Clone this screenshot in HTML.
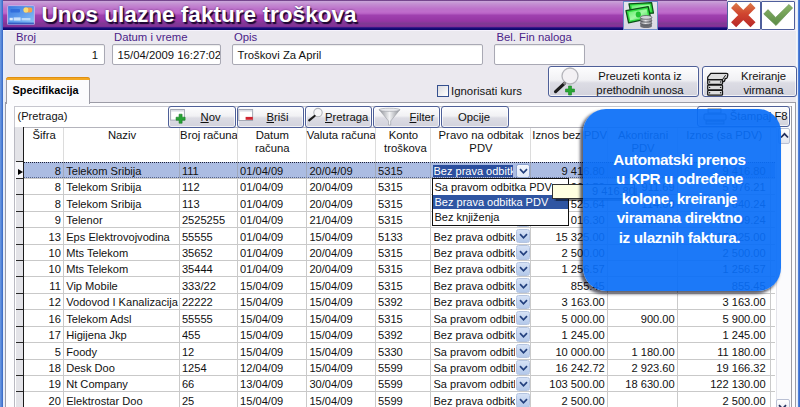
<!DOCTYPE html>
<html><head><meta charset="utf-8"><title>Unos ulazne fakture troškova</title>
<style>
html,body{margin:0;padding:0}
body{width:800px;height:407px;overflow:hidden;position:relative;background:#ebe9ef;font-family:"Liberation Sans",sans-serif;font-size:11.3px;color:#111;}
div,span{position:absolute;box-sizing:border-box;white-space:nowrap}
.lbl{color:#4b2488;font-size:11.3px;line-height:12px}
.inp{background:#fff;border:1px solid #a9a9b4;border-radius:2px;height:21px;top:44px;box-shadow:inset 0 1px 1px rgba(0,0,0,.08)}
.inp span{top:4px;line-height:12px;font-size:11.3px}
.btn{border:1px solid #4e5f98;border-radius:3px;background:linear-gradient(#fdfdfe 0%,#f1f1f4 45%,#dcdce4 55%,#d2d2dc 100%);box-shadow:inset 0 0 0 1px rgba(255,255,255,.7)}
.btn span{line-height:12px}
.hdr{top:127px;height:35px;text-align:center;line-height:13.3px;font-size:11.3px;padding-top:2.2px;white-space:normal;color:#111}
.hsep{top:128px;height:34px;width:1px;background:#dcdcdc}
.vsep{top:162px;height:245px;width:1px;background:rgba(150,150,150,.5)}
.hl{left:24px;height:1px;background:#c9c9c9;width:751px}
.c{height:16px;line-height:16px;font-size:11.1px;overflow:hidden}
.r{text-align:right}
.dd{width:14.5px;height:14.5px;left:515.5px;border:1px solid #b4c4e0;border-radius:2.5px;background:linear-gradient(#d6e2f6,#b4c9ea)}
.ind{left:15.5px;width:7.5px;background:#e3e3e8;border-top:1px solid #2a2a2a;}
u{text-decoration:underline}
</style></head><body>

<div style="left:0;top:0;width:2.7px;height:407px;background:linear-gradient(90deg,#6f9ae0,#4d7fd6 60%,#3563c0)"></div>
<div style="left:2.7px;top:29px;width:2.8px;height:378px;background:#e6edf9"></div>
<div style="left:798.2px;top:0;width:1.8px;height:407px;background:linear-gradient(90deg,#5a8ae0,#2f62c4)"></div>
<div style="left:796px;top:0;width:2.2px;height:407px;background:linear-gradient(90deg,#fbfcfe,#dbe6f7)"></div>
<div style="left:2.7px;top:0;width:724px;height:29.7px;background:linear-gradient(180deg,#6e3f86 0,#7a4a92 .8px,#c9a3d9 1.4px,#c48ed2 4px,#bc70ca 9px,#c06ccc 12px,#b45cc2 14px,#a041b0 15px,#9535a4 21px,#7e3a94 23.5px,#853298 25.5px,#7a2c94 27px,#1c1280 27.7px,#0a0668 29.7px)"></div>
<div style="left:2.7px;top:29.7px;width:794px;height:1.4px;background:#f6f3fc"></div>
<svg style="position:absolute;left:7px;top:4.8px" width="28" height="20.4" viewBox="0 0 28 20.4">
<defs><linearGradient id="ig" x1="0" y1="0" x2="1" y2="1"><stop offset="0" stop-color="#3a78e0"/><stop offset=".45" stop-color="#5a98ec"/><stop offset="1" stop-color="#8cc6f6"/></linearGradient></defs>
<rect x="0.6" y="0.6" width="26.8" height="19.2" rx="1.2" fill="url(#ig)" stroke="#c4b0e4" stroke-width="1"/>
<rect x="1.1" y="17.6" width="25.8" height="1.8" fill="#2a50b8" opacity=".85"/>
<rect x="16.6" y="2.6" width="8.6" height="4.8" rx="1.6" fill="#f3a24a"/><rect x="16.6" y="2.6" width="4.6" height="4.8" rx="1.6" fill="#f7e27a" opacity=".9"/>
<rect x="3.4" y="4" width="9.6" height="3.4" rx="1" fill="#2a66d8" opacity=".75"/>
<rect x="2.6" y="12.8" width="3.2" height="2.6" fill="#e8f4fd" opacity=".9"/><rect x="6.6" y="12.4" width="7" height="3.2" fill="#e8f4fd" opacity=".8"/><rect x="14.6" y="13" width="8.8" height="2.4" fill="#cfe6fa" opacity=".8"/>
</svg>
<div style="left:41.5px;top:1.5px;font-size:22.6px;font-weight:bold;color:#fff;line-height:26px;text-shadow:1.5px 1.5px 1px #1a0630,0 0 2px rgba(40,0,60,.6)">Unos ulazne fakture troškova</div>
<div style="left:622.5px;top:1px;width:35.5px;height:28.5px;background:linear-gradient(#e6e6ec,#d9d9e2);border:1px solid #6c8cc8"></div>
<svg style="position:absolute;left:615px;top:0" width="50" height="32" viewBox="615 0 50 32">
<defs><linearGradient id="bg1" x1="0" y1="0" x2="1" y2="1"><stop offset="0" stop-color="#58ec62"/><stop offset=".5" stop-color="#a4f9a6"/><stop offset="1" stop-color="#30d840"/></linearGradient>
<linearGradient id="cy" x1="0" y1="0" x2="1" y2="0"><stop offset="0" stop-color="#6e7076"/><stop offset=".45" stop-color="#e4e5e8"/><stop offset="1" stop-color="#77797f"/></linearGradient></defs>
<polygon points="629,3.8 651.6,2.6 653.4,13 631,14.2" fill="#2fdc40" stroke="#0b4f16" stroke-width="1.3" stroke-linejoin="round"/>
<polygon points="631.5,5.6 649.8,4.6 651,11.4 632.6,12.4" fill="url(#bg1)"/>
<polygon points="626,10.6 648.2,6.6 650.6,18.2 628.6,22.8" fill="#2fdc40" stroke="#0b4f16" stroke-width="1.3" stroke-linejoin="round"/>
<polygon points="628.4,12.2 646.6,8.9 648.2,16.9 630.2,20.6" fill="url(#bg1)"/>
<ellipse cx="638.3" cy="14.6" rx="2.6" ry="3" fill="#22c234"/>
<rect x="640.3" y="17.4" width="11.6" height="8.8" fill="url(#cy)"/>
<ellipse cx="646.1" cy="26.2" rx="5.8" ry="1.9" fill="#6a6c72"/>
<path d="M640.3 20.4 a5.8 1.7 0 0 0 11.6 0 M640.3 23.3 a5.8 1.7 0 0 0 11.6 0" fill="none" stroke="#55575d" stroke-width=".9"/>
<ellipse cx="646.1" cy="17.4" rx="5.8" ry="1.9" fill="#d2d3d8" stroke="#5e6066" stroke-width=".8"/>
</svg>
<div style="left:726.5px;top:1px;width:34px;height:28.5px;background:#fff;border:1px solid #4f5f9c;border-radius:1px"></div>
<div style="left:761px;top:1px;width:34px;height:28.5px;background:#fff;border:1px solid #4f5f9c;border-radius:1px"></div>
<svg style="position:absolute;left:727px;top:0" width="68" height="30" viewBox="727 0 68 30">
<defs><linearGradient id="rg" gradientUnits="userSpaceOnUse" x1="0" y1="3" x2="0" y2="27"><stop offset="0" stop-color="#dc7a48"/><stop offset=".45" stop-color="#d0452f"/><stop offset="1" stop-color="#b82828"/></linearGradient>
<linearGradient id="gg" gradientUnits="userSpaceOnUse" x1="0" y1="4" x2="0" y2="26"><stop offset="0" stop-color="#8ab466"/><stop offset="1" stop-color="#5a8a46"/></linearGradient></defs>
<path d="M733.6 5.4 L753 24.8 M753 5.4 L733.6 24.8" stroke="url(#rg)" stroke-width="7.2" fill="none"/>
<polygon points="763.7,14 768,9.6 775.6,17.4 789,4.4 792.6,8 776,25.6" fill="url(#gg)" stroke="#5f8c4c" stroke-width=".6" stroke-linejoin="round"/>
</svg>
<div class="lbl" style="left:16px;top:30.7px">Broj</div>
<div class="lbl" style="left:114px;top:30.7px">Datum i vreme</div>
<div class="lbl" style="left:234px;top:30.7px">Opis</div>
<div class="lbl" style="left:496.5px;top:30.7px">Bel. Fin naloga</div>
<div class="inp" style="left:14px;width:91px"><span style="right:6px">1</span></div>
<div class="inp" style="left:112px;width:109px;overflow:hidden"><span style="left:4.5px">15/04/2009 16:27:02</span></div>
<div class="inp" style="left:232px;width:251px"><span style="left:4.5px">Troškovi Za April</span></div>
<div class="inp" style="left:494px;width:91px"></div>
<div style="left:437px;top:84.5px;width:12px;height:12px;border:1px solid #35508f;background:linear-gradient(135deg,#dcdce0,#fff)"></div>
<div style="left:451px;top:84.5px;line-height:12px;font-size:11.4px">Ignorisati kurs</div>
<div class="btn" style="left:548px;top:66px;width:151px;height:31px"><span style="left:45px;width:92px;top:3px;text-align:center;white-space:normal;line-height:13.6px;font-size:11.3px">Preuzeti konta iz prethodnih unosa</span></div>
<div class="btn" style="left:701.5px;top:66px;width:95.5px;height:31px"><span style="left:33px;width:56px;top:3px;text-align:center;white-space:normal;line-height:13.6px;font-size:11.3px">Kreiranje virmana</span></div>
<svg style="position:absolute;left:550px;top:66px" width="34" height="31" viewBox="0 0 34 31">
<circle cx="20" cy="10" r="8" fill="#f3f1f4" stroke="#b4b4ba" stroke-width="1.3"/>
<path d="M14.2 17.6 L5.6 25.6" stroke="#1c1c1c" stroke-width="3.3" stroke-linecap="round"/>
<path d="M15.3 16.5 L13.6 18.1" stroke="#8a8a8a" stroke-width="2.6"/>
<path d="M18.5 20 h3 v3 h3 v3 h-3 v3 h-3 v-3 h-3 v-3 h3z" fill="#2aa532" stroke="#168a24" stroke-width=".6" stroke-linejoin="round"/>
</svg>
<svg style="position:absolute;left:704px;top:70px" width="30" height="28" viewBox="704 70 30 28">
<g fill="#dedede" stroke="#151515" stroke-width="1.25" stroke-linejoin="round">
<rect x="707.7" y="90.4" width="14.8" height="4.8" rx=".8"/>
<rect x="707.7" y="85" width="14.8" height="4.8" rx=".8"/>
<rect x="707.7" y="79.6" width="14.8" height="4.8" rx=".8"/>
<path d="M707.7 79.6 V77.2 L710.8 73.3 H726.2 Q728 73.3 727.8 75.2 L727.3 77.4 Q726.8 78.8 725.2 78.5 L724.7 80.6 Q724 82 722.5 81.4 V79.6 Z"/>
</g>
<path d="M722.5 79.6 L725.6 75.2" fill="none" stroke="#151515" stroke-width="1"/>
<g fill="#151515"><circle cx="709.6" cy="82" r=".7"/><circle cx="720.6" cy="82" r=".7"/><circle cx="709.6" cy="87.4" r=".7"/><circle cx="720.6" cy="87.4" r=".7"/><circle cx="709.6" cy="92.8" r=".7"/><circle cx="720.6" cy="92.8" r=".7"/></g>
</svg>
<div style="left:5.3px;top:102px;width:790.7px;height:310px;background:#fcfcfe;border:1px solid #9c9ca6"></div>
<div style="left:5.5px;top:76.5px;width:84px;height:27px;background:#fbfbfd;border:1px solid #9c9ca6;border-bottom:none;border-radius:3px 3px 0 0"></div>
<div style="left:5.5px;top:76.5px;width:84px;height:3px;background:#f2a722;border-radius:3px 3px 0 0;border-top:1px solid #e08f10"></div>
<div style="left:12.5px;top:84px;font-weight:bold;font-size:10.9px;line-height:12px;color:#000">Specifikacija</div>
<div style="left:14px;top:127px;width:777px;height:285px;background:#fff;border-left:1px solid #b9b9c2"></div>
<div style="left:14px;top:105.5px;width:777.5px;height:22px;background:#fff;border:1px solid #c6c6ce;border-bottom-color:#b4b4bc"></div>
<div style="left:17.5px;top:109.5px;font-size:11.1px;line-height:12px">(Pretraga)</div>
<div class="btn" style="left:167.5px;top:105.5px;width:68.5px;height:22px"></div>
<div style="left:200.5px;top:110.5px;line-height:12px;font-size:11.3px"><u>N</u>ov</div>
<div class="btn" style="left:237px;top:105.5px;width:67px;height:22px"></div>
<div style="left:266.5px;top:110.5px;line-height:12px;font-size:11.3px"><u>B</u>riši</div>
<div class="btn" style="left:304.5px;top:105.5px;width:67px;height:22px"></div>
<div style="left:325px;top:110.5px;line-height:12px;font-size:11.3px"><u>P</u>retraga</div>
<div class="btn" style="left:373px;top:105.5px;width:67px;height:22px"></div>
<div style="left:409.5px;top:110.5px;line-height:12px;font-size:11.3px"><u>F</u>ilter</div>
<div class="btn" style="left:441px;top:105.5px;width:67.5px;height:22px"></div>
<div style="left:458px;top:110.5px;line-height:12px;font-size:11.3px">Opcije</div>
<svg style="position:absolute;left:169px;top:107px" width="19" height="19" viewBox="0 0 19 19">
<rect x="1.6" y="2.5" width="13.8" height="10.6" fill="#fff" stroke="#a4a8b4" stroke-width="1"/><rect x="2.1" y="3" width="12.8" height="1.6" fill="#dadce4"/>
<path d="M10.1 7.2 h3 v3 h3 v3 h-3 v3 h-3 v-3 h-3 v-3 h3z" fill="#27a335" stroke="#157a22" stroke-width=".6" stroke-linejoin="round"/></svg>
<svg style="position:absolute;left:237px;top:107px" width="19" height="19" viewBox="0 0 19 19">
<rect x="1.8" y="2.5" width="13.8" height="11" fill="#fff" stroke="#a4a8b4" stroke-width="1"/><rect x="2.3" y="3" width="12.8" height="1.6" fill="#dadce4"/>
<rect x="8.6" y="9.9" width="7.2" height="2.9" fill="#cf2430"/></svg>
<svg style="position:absolute;left:306px;top:107px" width="18" height="19" viewBox="0 0 18 19">
<circle cx="12" cy="5.6" r="4.2" fill="#f6f6f8" stroke="#b4b6bc" stroke-width="1.1"/>
<path d="M8.6 9 L3.2 13.4" stroke="#1c1c1c" stroke-width="2.2" stroke-linecap="round"/></svg>
<svg style="position:absolute;left:378px;top:107px" width="24" height="20" viewBox="0 0 24 20">
<defs><linearGradient id="fg" x1="0" y1="0" x2="1" y2="0"><stop offset="0" stop-color="#8a8d94"/><stop offset=".5" stop-color="#f2f3f5"/><stop offset="1" stop-color="#8a8d94"/></linearGradient></defs>
<path d="M1 2.5 H22 L12.7 14 V18 H10.5 V14 Z" fill="url(#fg)" stroke="#9a9da4" stroke-width=".6"/>
<ellipse cx="11.5" cy="2.8" rx="10.5" ry="1.6" fill="#e9eaee" stroke="#9a9da4" stroke-width=".6"/></svg>
<div class="btn" style="left:697px;top:105.5px;width:92.5px;height:21.5px"></div>
<div style="left:729.8px;top:110px;line-height:12px;font-size:11.3px">Štampaj F8</div>
<svg style="position:absolute;left:702px;top:108px" width="26" height="18" viewBox="0 0 26 18"><rect x="6" y="1" width="13" height="4" fill="#eee" stroke="#555" stroke-width=".8"/><rect x="2" y="6" width="22" height="6" rx="1" fill="#d8d8dc" stroke="#444" stroke-width=".9"/><rect x="4" y="13" width="18" height="3" fill="#bbb" stroke="#444" stroke-width=".8"/></svg>
<div style="left:15px;top:127px;width:8px;height:35px;background:#e3e3e8"></div>
<div style="left:22.6px;top:127px;width:1.4px;height:280px;background:#1c1c1c"></div>
<div style="left:24px;top:162.00px;width:751px;height:16.13px;background:#abbce2;border-top:1px dotted #1c2038;border-bottom:1px dotted #56648c"></div>
<div class="hdr" style="left:24.0px;width:40.2px;">Šifra</div>
<div class="hsep" style="left:63.2px"></div>
<div class="vsep" style="left:63.2px"></div>
<div class="hdr" style="left:64.2px;width:115.7px;">Naziv</div>
<div class="hsep" style="left:178.9px"></div>
<div class="vsep" style="left:178.9px"></div>
<div class="hdr" style="left:179.9px;width:58.19999999999999px;">Broj računa</div>
<div class="hsep" style="left:237.1px"></div>
<div class="vsep" style="left:237.1px"></div>
<div class="hdr" style="left:238.1px;width:68.4px;padding-left:8px;padding-right:8px;">Datum računa</div>
<div class="hsep" style="left:305.5px"></div>
<div class="vsep" style="left:305.5px"></div>
<div class="hdr" style="left:306.5px;width:69.60000000000002px;">Valuta računa</div>
<div class="hsep" style="left:375.1px"></div>
<div class="vsep" style="left:375.1px"></div>
<div class="hdr" style="left:376.1px;width:54.599999999999966px;padding-left:8px;padding-right:8px;">Konto troškova</div>
<div class="hsep" style="left:429.7px"></div>
<div class="vsep" style="left:429.7px"></div>
<div class="hdr" style="left:430.7px;width:100.59999999999997px;padding-left:5px;padding-right:5px;">Pravo na odbitak PDV</div>
<div class="hsep" style="left:530.3px"></div>
<div class="vsep" style="left:530.3px"></div>
<div class="hdr" style="left:531.3px;width:76.80000000000007px;">Iznos bez PDV</div>
<div class="hsep" style="left:607.1px"></div>
<div class="vsep" style="left:607.1px"></div>
<div class="hdr" style="left:608.1px;width:69.89999999999998px;padding-left:8px;padding-right:8px;">Akontirani PDV</div>
<div class="hsep" style="left:677.0px"></div>
<div class="vsep" style="left:677.0px"></div>
<div class="hdr" style="left:678.0px;width:92.70000000000005px;">Iznos (sa PDV)</div>
<div class="hsep" style="left:769.7px"></div>
<div class="vsep" style="left:769.7px"></div>
<div class="hl" style="top:177.83px"></div>
<div class="ind" style="top:161.40px;height:16.43px"></div>
<div class="c r" style="left:26.0px;width:34.9px;top:162.80px;">8</div>
<div class="c " style="left:66.2px;width:110.4px;top:162.80px;width:112.7px">Telekom Sribija</div>
<div class="c " style="left:181.9px;width:52.9px;top:162.80px;">111</div>
<div class="c " style="left:240.1px;width:63.1px;top:162.80px;">01/04/09</div>
<div class="c " style="left:308.5px;width:64.3px;top:162.80px;left:309.4px">20/04/09</div>
<div class="c " style="left:378.1px;width:49.3px;top:162.80px;">5315</div>
<div style="left:433px;top:164.70px;width:79.5px;height:12.2px;background:#2c4f9e"></div>
<div class="c" style="left:433.5px;width:79px;top:162.80px;color:#fff;font-size:11px">Bez prava odbitka PDV</div>
<div class="dd" style="top:163.50px;background:linear-gradient(#f4f7fd,#dfe8f8);border-color:#8ea4d0"></div>
<svg style="position:absolute;left:518.5px;top:167.50px" width="9" height="7" viewBox="0 0 9 7"><path d="M1 1.2 L4.5 4.8 L8 1.2" fill="none" stroke="#23407e" stroke-width="1.7"/></svg>
<div class="c r" style="left:533.3px;width:71.5px;top:162.80px;">9 416.80</div>
<div class="c r" style="left:610.1px;width:64.6px;top:162.80px;"></div>
<div class="c r" style="left:680.0px;width:87.4px;top:162.80px;width:85.7px">9 416.80</div>
<div class="hl" style="top:194.26px"></div>
<div class="ind" style="top:177.83px;height:16.43px"></div>
<div class="c r" style="left:26.0px;width:34.9px;top:179.23px;">8</div>
<div class="c " style="left:66.2px;width:110.4px;top:179.23px;width:112.7px">Telekom Sribija</div>
<div class="c " style="left:181.9px;width:52.9px;top:179.23px;">112</div>
<div class="c " style="left:240.1px;width:63.1px;top:179.23px;">01/04/09</div>
<div class="c " style="left:308.5px;width:64.3px;top:179.23px;left:309.4px">20/04/09</div>
<div class="c " style="left:378.1px;width:49.3px;top:179.23px;">5315</div>
<div class="c" style="left:433.5px;width:81px;top:179.23px;font-size:11px">Sa pravom odbitka PDV</div>
<div class="dd" style="top:179.53px"></div>
<svg style="position:absolute;left:518.5px;top:183.93px" width="9" height="7" viewBox="0 0 9 7"><path d="M1 1.2 L4.5 4.8 L8 1.2" fill="none" stroke="#23407e" stroke-width="1.7"/></svg>
<div class="c r" style="left:533.3px;width:71.5px;top:179.23px;">5 064.52</div>
<div class="c r" style="left:610.1px;width:64.6px;top:179.23px;">911.69</div>
<div class="c r" style="left:680.0px;width:87.4px;top:179.23px;width:85.7px">5 976.21</div>
<div class="hl" style="top:210.69px"></div>
<div class="ind" style="top:194.26px;height:16.43px"></div>
<div class="c r" style="left:26.0px;width:34.9px;top:195.66px;">8</div>
<div class="c " style="left:66.2px;width:110.4px;top:195.66px;width:112.7px">Telekom Sribija</div>
<div class="c " style="left:181.9px;width:52.9px;top:195.66px;">113</div>
<div class="c " style="left:240.1px;width:63.1px;top:195.66px;">01/04/09</div>
<div class="c " style="left:308.5px;width:64.3px;top:195.66px;left:309.4px">20/04/09</div>
<div class="c " style="left:378.1px;width:49.3px;top:195.66px;">5315</div>
<div class="c" style="left:433.5px;width:81px;top:195.66px;font-size:11px">Bez prava odbitka PDV</div>
<div class="dd" style="top:195.96px"></div>
<svg style="position:absolute;left:518.5px;top:200.36px" width="9" height="7" viewBox="0 0 9 7"><path d="M1 1.2 L4.5 4.8 L8 1.2" fill="none" stroke="#23407e" stroke-width="1.7"/></svg>
<div class="c r" style="left:533.3px;width:71.5px;top:195.66px;">525.64</div>
<div class="c r" style="left:610.1px;width:64.6px;top:195.66px;">114.60</div>
<div class="c r" style="left:680.0px;width:87.4px;top:195.66px;width:85.7px">640.24</div>
<div class="hl" style="top:227.12px"></div>
<div class="ind" style="top:210.69px;height:16.43px"></div>
<div class="c r" style="left:26.0px;width:34.9px;top:212.09px;">9</div>
<div class="c " style="left:66.2px;width:110.4px;top:212.09px;width:112.7px">Telenor</div>
<div class="c " style="left:181.9px;width:52.9px;top:212.09px;">2525255</div>
<div class="c " style="left:240.1px;width:63.1px;top:212.09px;">01/04/09</div>
<div class="c " style="left:308.5px;width:64.3px;top:212.09px;left:309.4px">21/04/09</div>
<div class="c " style="left:378.1px;width:49.3px;top:212.09px;">5315</div>
<div class="c" style="left:433.5px;width:81px;top:212.09px;font-size:11px">Bez prava odbitka PDV</div>
<div class="dd" style="top:212.39px"></div>
<svg style="position:absolute;left:518.5px;top:216.79px" width="9" height="7" viewBox="0 0 9 7"><path d="M1 1.2 L4.5 4.8 L8 1.2" fill="none" stroke="#23407e" stroke-width="1.7"/></svg>
<div class="c r" style="left:533.3px;width:71.5px;top:212.09px;">1 016.30</div>
<div class="c r" style="left:610.1px;width:64.6px;top:212.09px;">182.94</div>
<div class="c r" style="left:680.0px;width:87.4px;top:212.09px;width:85.7px">1 199.24</div>
<div class="hl" style="top:243.55px"></div>
<div class="ind" style="top:227.12px;height:16.43px"></div>
<div class="c r" style="left:26.0px;width:34.9px;top:228.52px;">13</div>
<div class="c " style="left:66.2px;width:110.4px;top:228.52px;width:112.7px">Eps Elektrovojvodina</div>
<div class="c " style="left:181.9px;width:52.9px;top:228.52px;">55555</div>
<div class="c " style="left:240.1px;width:63.1px;top:228.52px;">01/04/09</div>
<div class="c " style="left:308.5px;width:64.3px;top:228.52px;left:309.4px">15/04/09</div>
<div class="c " style="left:378.1px;width:49.3px;top:228.52px;">5133</div>
<div class="c" style="left:433.5px;width:81px;top:228.52px;font-size:11px">Bez prava odbitka PDV</div>
<div class="dd" style="top:228.82px"></div>
<svg style="position:absolute;left:518.5px;top:233.22px" width="9" height="7" viewBox="0 0 9 7"><path d="M1 1.2 L4.5 4.8 L8 1.2" fill="none" stroke="#23407e" stroke-width="1.7"/></svg>
<div class="c r" style="left:533.3px;width:71.5px;top:228.52px;">15 325.00</div>
<div class="c r" style="left:610.1px;width:64.6px;top:228.52px;"></div>
<div class="c r" style="left:680.0px;width:87.4px;top:228.52px;width:85.7px">15 325.00</div>
<div class="hl" style="top:259.98px"></div>
<div class="ind" style="top:243.55px;height:16.43px"></div>
<div class="c r" style="left:26.0px;width:34.9px;top:244.95px;">10</div>
<div class="c " style="left:66.2px;width:110.4px;top:244.95px;width:112.7px">Mts Telekom</div>
<div class="c " style="left:181.9px;width:52.9px;top:244.95px;">35652</div>
<div class="c " style="left:240.1px;width:63.1px;top:244.95px;">01/04/09</div>
<div class="c " style="left:308.5px;width:64.3px;top:244.95px;left:309.4px">20/04/09</div>
<div class="c " style="left:378.1px;width:49.3px;top:244.95px;">5315</div>
<div class="c" style="left:433.5px;width:81px;top:244.95px;font-size:11px">Bez prava odbitka PDV</div>
<div class="dd" style="top:245.25px"></div>
<svg style="position:absolute;left:518.5px;top:249.65px" width="9" height="7" viewBox="0 0 9 7"><path d="M1 1.2 L4.5 4.8 L8 1.2" fill="none" stroke="#23407e" stroke-width="1.7"/></svg>
<div class="c r" style="left:533.3px;width:71.5px;top:244.95px;">2 500.00</div>
<div class="c r" style="left:610.1px;width:64.6px;top:244.95px;"></div>
<div class="c r" style="left:680.0px;width:87.4px;top:244.95px;width:85.7px">2 500.00</div>
<div class="hl" style="top:276.41px"></div>
<div class="ind" style="top:259.98px;height:16.43px"></div>
<div class="c r" style="left:26.0px;width:34.9px;top:261.38px;">10</div>
<div class="c " style="left:66.2px;width:110.4px;top:261.38px;width:112.7px">Mts Telekom</div>
<div class="c " style="left:181.9px;width:52.9px;top:261.38px;">35444</div>
<div class="c " style="left:240.1px;width:63.1px;top:261.38px;">01/04/09</div>
<div class="c " style="left:308.5px;width:64.3px;top:261.38px;left:309.4px">20/04/09</div>
<div class="c " style="left:378.1px;width:49.3px;top:261.38px;">5315</div>
<div class="c" style="left:433.5px;width:81px;top:261.38px;font-size:11px">Bez prava odbitka PDV</div>
<div class="dd" style="top:261.68px"></div>
<svg style="position:absolute;left:518.5px;top:266.08px" width="9" height="7" viewBox="0 0 9 7"><path d="M1 1.2 L4.5 4.8 L8 1.2" fill="none" stroke="#23407e" stroke-width="1.7"/></svg>
<div class="c r" style="left:533.3px;width:71.5px;top:261.38px;">1 256.57</div>
<div class="c r" style="left:610.1px;width:64.6px;top:261.38px;"></div>
<div class="c r" style="left:680.0px;width:87.4px;top:261.38px;width:85.7px">1 256.57</div>
<div class="hl" style="top:292.84px"></div>
<div class="ind" style="top:276.41px;height:16.43px"></div>
<div class="c r" style="left:26.0px;width:34.9px;top:277.81px;">11</div>
<div class="c " style="left:66.2px;width:110.4px;top:277.81px;width:112.7px">Vip Mobile</div>
<div class="c " style="left:181.9px;width:52.9px;top:277.81px;">333/22</div>
<div class="c " style="left:240.1px;width:63.1px;top:277.81px;">15/04/09</div>
<div class="c " style="left:308.5px;width:64.3px;top:277.81px;left:309.4px">15/04/09</div>
<div class="c " style="left:378.1px;width:49.3px;top:277.81px;">5315</div>
<div class="c" style="left:433.5px;width:81px;top:277.81px;font-size:11px">Bez prava odbitka PDV</div>
<div class="dd" style="top:278.11px"></div>
<svg style="position:absolute;left:518.5px;top:282.51px" width="9" height="7" viewBox="0 0 9 7"><path d="M1 1.2 L4.5 4.8 L8 1.2" fill="none" stroke="#23407e" stroke-width="1.7"/></svg>
<div class="c r" style="left:533.3px;width:71.5px;top:277.81px;">855.45</div>
<div class="c r" style="left:610.1px;width:64.6px;top:277.81px;"></div>
<div class="c r" style="left:680.0px;width:87.4px;top:277.81px;width:85.7px">855.45</div>
<div class="hl" style="top:309.27px"></div>
<div class="ind" style="top:292.84px;height:16.43px"></div>
<div class="c r" style="left:26.0px;width:34.9px;top:294.24px;">12</div>
<div class="c " style="left:66.2px;width:110.4px;top:294.24px;width:112.7px">Vodovod I Kanalizacija</div>
<div class="c " style="left:181.9px;width:52.9px;top:294.24px;">22222</div>
<div class="c " style="left:240.1px;width:63.1px;top:294.24px;">15/04/09</div>
<div class="c " style="left:308.5px;width:64.3px;top:294.24px;left:309.4px">15/04/09</div>
<div class="c " style="left:378.1px;width:49.3px;top:294.24px;">5392</div>
<div class="c" style="left:433.5px;width:81px;top:294.24px;font-size:11px">Bez prava odbitka PDV</div>
<div class="dd" style="top:294.54px"></div>
<svg style="position:absolute;left:518.5px;top:298.94px" width="9" height="7" viewBox="0 0 9 7"><path d="M1 1.2 L4.5 4.8 L8 1.2" fill="none" stroke="#23407e" stroke-width="1.7"/></svg>
<div class="c r" style="left:533.3px;width:71.5px;top:294.24px;">3 163.00</div>
<div class="c r" style="left:610.1px;width:64.6px;top:294.24px;"></div>
<div class="c r" style="left:680.0px;width:87.4px;top:294.24px;width:85.7px">3 163.00</div>
<div class="hl" style="top:325.70px"></div>
<div class="ind" style="top:309.27px;height:16.43px"></div>
<div class="c r" style="left:26.0px;width:34.9px;top:310.67px;">16</div>
<div class="c " style="left:66.2px;width:110.4px;top:310.67px;width:112.7px">Telekom Adsl</div>
<div class="c " style="left:181.9px;width:52.9px;top:310.67px;">55555</div>
<div class="c " style="left:240.1px;width:63.1px;top:310.67px;">15/04/09</div>
<div class="c " style="left:308.5px;width:64.3px;top:310.67px;left:309.4px">15/04/09</div>
<div class="c " style="left:378.1px;width:49.3px;top:310.67px;">5315</div>
<div class="c" style="left:433.5px;width:81px;top:310.67px;font-size:11px">Sa pravom odbitka PDV</div>
<div class="dd" style="top:310.97px"></div>
<svg style="position:absolute;left:518.5px;top:315.37px" width="9" height="7" viewBox="0 0 9 7"><path d="M1 1.2 L4.5 4.8 L8 1.2" fill="none" stroke="#23407e" stroke-width="1.7"/></svg>
<div class="c r" style="left:533.3px;width:71.5px;top:310.67px;">5 000.00</div>
<div class="c r" style="left:610.1px;width:64.6px;top:310.67px;">900.00</div>
<div class="c r" style="left:680.0px;width:87.4px;top:310.67px;width:85.7px">5 900.00</div>
<div class="hl" style="top:342.13px"></div>
<div class="ind" style="top:325.70px;height:16.43px"></div>
<div class="c r" style="left:26.0px;width:34.9px;top:327.10px;">17</div>
<div class="c " style="left:66.2px;width:110.4px;top:327.10px;width:112.7px">Higijena Jkp</div>
<div class="c " style="left:181.9px;width:52.9px;top:327.10px;">455</div>
<div class="c " style="left:240.1px;width:63.1px;top:327.10px;">15/04/09</div>
<div class="c " style="left:308.5px;width:64.3px;top:327.10px;left:309.4px">15/04/09</div>
<div class="c " style="left:378.1px;width:49.3px;top:327.10px;">5392</div>
<div class="c" style="left:433.5px;width:81px;top:327.10px;font-size:11px">Bez prava odbitka PDV</div>
<div class="dd" style="top:327.40px"></div>
<svg style="position:absolute;left:518.5px;top:331.80px" width="9" height="7" viewBox="0 0 9 7"><path d="M1 1.2 L4.5 4.8 L8 1.2" fill="none" stroke="#23407e" stroke-width="1.7"/></svg>
<div class="c r" style="left:533.3px;width:71.5px;top:327.10px;">1 245.00</div>
<div class="c r" style="left:610.1px;width:64.6px;top:327.10px;"></div>
<div class="c r" style="left:680.0px;width:87.4px;top:327.10px;width:85.7px">1 245.00</div>
<div class="hl" style="top:358.56px"></div>
<div class="ind" style="top:342.13px;height:16.43px"></div>
<div class="c r" style="left:26.0px;width:34.9px;top:343.53px;">5</div>
<div class="c " style="left:66.2px;width:110.4px;top:343.53px;width:112.7px">Foody</div>
<div class="c " style="left:181.9px;width:52.9px;top:343.53px;">12</div>
<div class="c " style="left:240.1px;width:63.1px;top:343.53px;">15/04/09</div>
<div class="c " style="left:308.5px;width:64.3px;top:343.53px;left:309.4px">15/04/09</div>
<div class="c " style="left:378.1px;width:49.3px;top:343.53px;">5330</div>
<div class="c" style="left:433.5px;width:81px;top:343.53px;font-size:11px">Sa pravom odbitka PDV</div>
<div class="dd" style="top:343.83px"></div>
<svg style="position:absolute;left:518.5px;top:348.23px" width="9" height="7" viewBox="0 0 9 7"><path d="M1 1.2 L4.5 4.8 L8 1.2" fill="none" stroke="#23407e" stroke-width="1.7"/></svg>
<div class="c r" style="left:533.3px;width:71.5px;top:343.53px;">10 000.00</div>
<div class="c r" style="left:610.1px;width:64.6px;top:343.53px;">1 180.00</div>
<div class="c r" style="left:680.0px;width:87.4px;top:343.53px;width:85.7px">11 180.00</div>
<div class="hl" style="top:374.99px"></div>
<div class="ind" style="top:358.56px;height:16.43px"></div>
<div class="c r" style="left:26.0px;width:34.9px;top:359.96px;">18</div>
<div class="c " style="left:66.2px;width:110.4px;top:359.96px;width:112.7px">Desk Doo</div>
<div class="c " style="left:181.9px;width:52.9px;top:359.96px;">1254</div>
<div class="c " style="left:240.1px;width:63.1px;top:359.96px;">12/04/09</div>
<div class="c " style="left:308.5px;width:64.3px;top:359.96px;left:309.4px">15/04/09</div>
<div class="c " style="left:378.1px;width:49.3px;top:359.96px;">5599</div>
<div class="c" style="left:433.5px;width:81px;top:359.96px;font-size:11px">Sa pravom odbitka PDV</div>
<div class="dd" style="top:360.26px"></div>
<svg style="position:absolute;left:518.5px;top:364.66px" width="9" height="7" viewBox="0 0 9 7"><path d="M1 1.2 L4.5 4.8 L8 1.2" fill="none" stroke="#23407e" stroke-width="1.7"/></svg>
<div class="c r" style="left:533.3px;width:71.5px;top:359.96px;">16 242.72</div>
<div class="c r" style="left:610.1px;width:64.6px;top:359.96px;">2 923.60</div>
<div class="c r" style="left:680.0px;width:87.4px;top:359.96px;width:85.7px">19 166.32</div>
<div class="hl" style="top:391.42px"></div>
<div class="ind" style="top:374.99px;height:16.43px"></div>
<div class="c r" style="left:26.0px;width:34.9px;top:376.39px;">19</div>
<div class="c " style="left:66.2px;width:110.4px;top:376.39px;width:112.7px">Nt Company</div>
<div class="c " style="left:181.9px;width:52.9px;top:376.39px;">66</div>
<div class="c " style="left:240.1px;width:63.1px;top:376.39px;">13/04/09</div>
<div class="c " style="left:308.5px;width:64.3px;top:376.39px;left:309.4px">30/04/09</div>
<div class="c " style="left:378.1px;width:49.3px;top:376.39px;">5599</div>
<div class="c" style="left:433.5px;width:81px;top:376.39px;font-size:11px">Sa pravom odbitka PDV</div>
<div class="dd" style="top:376.69px"></div>
<svg style="position:absolute;left:518.5px;top:381.09px" width="9" height="7" viewBox="0 0 9 7"><path d="M1 1.2 L4.5 4.8 L8 1.2" fill="none" stroke="#23407e" stroke-width="1.7"/></svg>
<div class="c r" style="left:533.3px;width:71.5px;top:376.39px;">103 500.00</div>
<div class="c r" style="left:610.1px;width:64.6px;top:376.39px;">18 630.00</div>
<div class="c r" style="left:680.0px;width:87.4px;top:376.39px;width:85.7px">122 130.00</div>
<div class="hl" style="top:407.85px"></div>
<div class="ind" style="top:391.42px;height:16.43px"></div>
<div class="c r" style="left:26.0px;width:34.9px;top:392.82px;">20</div>
<div class="c " style="left:66.2px;width:110.4px;top:392.82px;width:112.7px">Elektrostar Doo</div>
<div class="c " style="left:181.9px;width:52.9px;top:392.82px;">25</div>
<div class="c " style="left:240.1px;width:63.1px;top:392.82px;">15/04/09</div>
<div class="c " style="left:308.5px;width:64.3px;top:392.82px;left:309.4px">15/04/09</div>
<div class="c " style="left:378.1px;width:49.3px;top:392.82px;">5599</div>
<div class="c" style="left:433.5px;width:81px;top:392.82px;font-size:11px">Bez prava odbitka PDV</div>
<div class="dd" style="top:393.12px"></div>
<svg style="position:absolute;left:518.5px;top:397.52px" width="9" height="7" viewBox="0 0 9 7"><path d="M1 1.2 L4.5 4.8 L8 1.2" fill="none" stroke="#23407e" stroke-width="1.7"/></svg>
<div class="c r" style="left:533.3px;width:71.5px;top:392.82px;">2 500.00</div>
<div class="c r" style="left:610.1px;width:64.6px;top:392.82px;"></div>
<div class="c r" style="left:680.0px;width:87.4px;top:392.82px;width:85.7px">2 500.00</div>
<div style="left:15px;top:162.40px;width:7.6px;height:15.93px;background:#f6f6fa"></div>
<div style="left:17.8px;top:169px;width:0;height:0;border-left:5.4px solid #000;border-top:3.5px solid transparent;border-bottom:3.5px solid transparent"></div>
<div style="left:775.5px;top:127px;width:15px;height:285px;background:#fbfbfd;border-left:1px solid #e4e4ea"></div>
<div style="left:777.5px;top:127.5px;width:12px;height:16.5px;background:linear-gradient(#fff,#dfe3ee);border:1px solid #b9c0d4;border-radius:2px"></div>
<svg style="position:absolute;left:779.5px;top:132px" width="9" height="7" viewBox="0 0 9 7"><path d="M1 5.5 L4.5 1.8 L8 5.5" fill="none" stroke="#23305e" stroke-width="1.7"/></svg>
<div style="left:775.5px;top:399px;width:14px;height:16px;background:linear-gradient(#fff,#dfe3ee);border:1px solid #b9c0d4;border-radius:2px"></div>
<svg style="position:absolute;left:778px;top:403.5px" width="9" height="7" viewBox="0 0 9 7"><path d="M1 1.2 L4.5 4.8 L8 1.2" fill="none" stroke="#23305e" stroke-width="1.7"/></svg>
<div style="left:790.7px;top:106px;width:1px;height:301px;background:#9a9aa2"></div>
<div style="left:432px;top:177.5px;width:137px;height:48px;background:#fff;border:1px solid #111"></div>
<div style="left:433px;top:194.5px;width:135px;height:14px;background:#2f55a2"></div>
<div style="left:434.5px;top:180.5px;line-height:12px;font-size:11px">Sa pravom odbitka PDV</div>
<div style="left:434.5px;top:195.8px;line-height:12px;font-size:11px;color:#fff">Bez prava odbitka PDV</div>
<div style="left:434.5px;top:210.5px;line-height:12px;font-size:11px">Bez knjiženja</div>
<div style="left:552px;top:183.5px;width:83px;height:15px;background:#ffffe1;border:1px solid #333;box-shadow:1.5px 1.5px 1px rgba(0,0,0,.5);font-size:11px;line-height:12.5px;padding-left:39px">9 416.80</div>
<div style="left:582.5px;top:108.5px;width:198px;height:182.5px;border-radius:23px;background:rgba(10,110,247,.925);box-shadow:-2.5px 2.5px 3px rgba(0,0,20,.62)"></div>
<div style="left:581px;width:197px;text-align:center;top:149.8px;line-height:19px;font-size:15.3px;font-weight:bold;color:#fff;letter-spacing:-.36px">Automatski prenos</div>
<div style="left:581px;width:197px;text-align:center;top:169.3px;line-height:19px;font-size:15.3px;font-weight:bold;color:#fff;letter-spacing:-.36px">u KPR u određene</div>
<div style="left:581px;width:197px;text-align:center;top:188.8px;line-height:19px;font-size:15.3px;font-weight:bold;color:#fff;letter-spacing:-.36px">kolone, kreiranje</div>
<div style="left:581px;width:197px;text-align:center;top:208.3px;line-height:19px;font-size:15.3px;font-weight:bold;color:#fff;letter-spacing:-.36px">viramana direktno</div>
<div style="left:581px;width:197px;text-align:center;top:227.8px;line-height:19px;font-size:15.3px;font-weight:bold;color:#fff;letter-spacing:-.36px">iz ulaznih faktura.</div>
</body></html>
